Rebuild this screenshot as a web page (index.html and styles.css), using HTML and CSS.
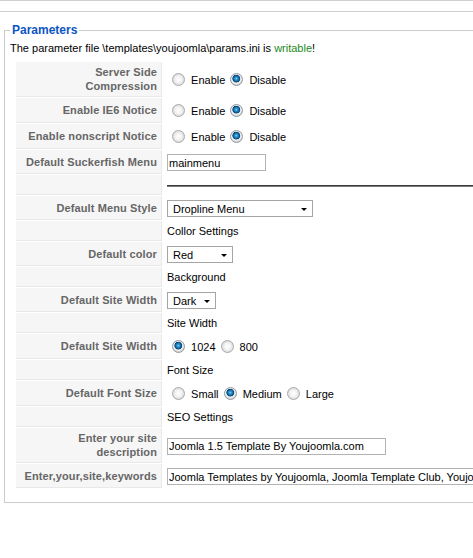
FILE: index.html
```html
<!DOCTYPE html>
<html>
<head>
<meta charset="utf-8">
<title>Parameters</title>
<link rel="stylesheet" href="styles.css">
</head>
<body>
<div class="topbar"></div>
<fieldset class="params">
  <legend>Parameters</legend>
  <p class="note">The parameter file \templates\youjoomla\params.ini is <span class="ok">writable</span>!</p>
  <table class="paramlist">
    <tr>
      <td class="key">Server Side<br>Compression</td>
      <td class="val"><input type="radio" name="gzip"> <label>Enable</label><input type="radio" name="gzip" checked> <label>Disable</label></td>
    </tr>
    <tr>
      <td class="key">Enable IE6 Notice</td>
      <td class="val"><input type="radio" name="ie6"> <label>Enable</label><input type="radio" name="ie6" checked> <label>Disable</label></td>
    </tr>
    <tr>
      <td class="key">Enable nonscript Notice</td>
      <td class="val"><input type="radio" name="ns"> <label>Enable</label><input type="radio" name="ns" checked> <label>Disable</label></td>
    </tr>
    <tr>
      <td class="key">Default Suckerfish Menu</td>
      <td class="val"><input class="text w-menu" type="text" value="mainmenu"></td>
    </tr>
    <tr>
      <td class="key"></td>
      <td class="val"><div class="rule"></div></td>
    </tr>
    <tr>
      <td class="key">Default Menu Style</td>
      <td class="val"><span class="sel"><select class="w-style"><option>Dropline Menu</option></select></span></td>
    </tr>
    <tr>
      <td class="key"></td>
      <td class="val">Collor Settings</td>
    </tr>
    <tr>
      <td class="key">Default color</td>
      <td class="val"><span class="sel"><select class="w-color"><option>Red</option></select></span></td>
    </tr>
    <tr>
      <td class="key"></td>
      <td class="val">Background</td>
    </tr>
    <tr>
      <td class="key">Default Site Width</td>
      <td class="val"><span class="sel"><select class="w-bg"><option>Dark</option></select></span></td>
    </tr>
    <tr>
      <td class="key"></td>
      <td class="val">Site Width</td>
    </tr>
    <tr>
      <td class="key">Default Site Width</td>
      <td class="val"><input type="radio" name="sw" checked> <label>1024</label><input type="radio" name="sw"> <label>800</label></td>
    </tr>
    <tr>
      <td class="key"></td>
      <td class="val">Font Size</td>
    </tr>
    <tr>
      <td class="key">Default Font Size</td>
      <td class="val"><input type="radio" name="fs"> <label>Small</label><input type="radio" name="fs" checked> <label>Medium</label><input type="radio" name="fs"> <label>Large</label></td>
    </tr>
    <tr>
      <td class="key"></td>
      <td class="val">SEO Settings</td>
    </tr>
    <tr>
      <td class="key">Enter your site<br>description</td>
      <td class="val"><input class="text w-desc" type="text" value="Joomla 1.5 Template By Youjoomla.com"></td>
    </tr>
    <tr>
      <td class="key">Enter,your,site,keywords</td>
      <td class="val"><input class="text w-keys" type="text" value="Joomla Templates by Youjoomla, Joomla Template Club, Youjoomla Templates"></td>
    </tr>
  </table>
</fieldset>
</body>
</html>
```
FILE: styles.css
```css
html, body {
  margin: 0;
  padding: 0;
  background: #fff;
}
body {
  font-family: "Liberation Sans", Arial, sans-serif;
  font-size: 11px;
  color: #000;
  overflow-x: hidden;
}
.topbar {
  height: 10px;
  border-top: 1px solid #cfcfcf;
  border-bottom: 1px solid #cfcfcf;
}
.params {
  width: max-content;
  margin: 11px 0 0 4px;
  border: 1px solid #cccccc;
  padding: 0 5px 13px 5px;
}
.params legend {
  padding: 0 2px;
  color: #0b55c4;
  font-size: 12px;
  font-weight: bold;
  line-height: 14px;
}
.note {
  margin: 4px 0 6px;
  line-height: 14px;
}
.ok {
  color: #1a8a1a;
}
.paramlist {
  border-collapse: separate;
  border-spacing: 1px;
  margin-left: 5px;
}
.paramlist td {
  line-height: 14px;
  vertical-align: middle;
}
.key {
  width: 141px;
  padding: 3px 4px 3px 0;
  background: #f6f6f6;
  border-right: 1px solid #e9e9e9;
  border-bottom: 1px solid #e9e9e9;
  text-align: right;
  font-weight: bold;
  color: #666;
  letter-spacing: 0.12px;
  white-space: nowrap;
}
.val {
  padding: 3px 4px;
  white-space: nowrap;
}
.val label {
  vertical-align: middle;
}
input[type="radio"] {
  -webkit-appearance: none;
  appearance: none;
  width: 13px;
  height: 13px;
  margin: 3px 3px 3px 5px;
  border-radius: 50%;
  border: 1px solid #a9a9a9;
  background: radial-gradient(circle at 50% 50%, #ffffff 0, #f4f4f4 3px, #dadada 6px);
  vertical-align: middle;
  box-sizing: border-box;
}
input[type="radio"]:checked {
  border-color: #8f9aa3;
  background: radial-gradient(circle at 48% 42%, #8fd8f8 0, #2c9ad6 1.2px, #0e5d97 3px, #0a3d66 3.6px, #d7dde2 4.1px, #f2f2f2 4.8px, #d2d2d2 6px);
}
.text {
  box-sizing: border-box;
  height: 17px;
  border: 1px solid #b3b3b3;
  padding: 0 1px;
  margin: 1px 0 0;
  font-family: "Liberation Sans", Arial, sans-serif;
  font-size: 11px;
  color: #000;
  vertical-align: middle;
  outline: none;
}
.w-menu { width: 99px; }
.w-desc { width: 219px; }
.w-keys { width: 430px; }
.rule {
  height: 0;
  border-top: 1px solid #3d3d3d;
  border-bottom: 1px solid #7a7a7a;
  margin: 7px 0 5px;
}
.sel {
  position: relative;
  display: inline-block;
  vertical-align: middle;
  margin-top: 1px;
}
.sel select {
  -webkit-appearance: none;
  appearance: none;
  box-sizing: border-box;
  height: 17px;
  border: 1px solid #a5a5a5;
  border-radius: 0;
  padding: 0 0 0 5px;
  margin: 0;
  background: #fff;
  font-family: "Liberation Sans", Arial, sans-serif;
  font-size: 11px;
  color: #000;
  display: block;
}
.sel::after {
  content: "";
  position: absolute;
  right: 6px;
  top: 8px;
  border-left: 3px solid transparent;
  border-right: 3px solid transparent;
  border-top: 3px solid #000;
  pointer-events: none;
}
.w-style { width: 146px; }
.w-color { width: 66px; }
.w-bg { width: 49px; }
```
